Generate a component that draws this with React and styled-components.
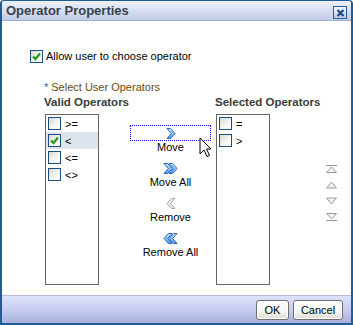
import React from 'react';
import styled, { createGlobalStyle } from 'styled-components';

const GlobalStyle = createGlobalStyle`
  html, body { margin: 0; padding: 0; background: #fff; }
  body {
    font-family: "Liberation Sans", Arial, sans-serif;
    font-size: 11px;
    color: #000;
  }
`;

const Window = styled.div`
  position: relative;
  width: 353px;
  height: 325px;
  box-sizing: border-box;
  display: flex;
  flex-direction: column;
  border: 1px solid #1f5c94;
  border-left-width: 2px;
  border-right-width: 2px;
  border-bottom-width: 2px;
  border-radius: 4px 4px 0 0;
  overflow: hidden;
  background: #fff;
`;

const TitleBar = styled.div`
  height: 19px;
  flex: none;
  display: flex;
  align-items: center;
  justify-content: space-between;
  padding: 0 4px 0 4px;
  background: linear-gradient(#eef1fa, #d9e0f2 45%, #c3cce6);
  border-bottom: 1px solid #9fb0d2;
`;

const Title = styled.span`
  font-size: 13px;
  font-weight: bold;
  color: #38434b;
`;

const CloseBox = styled.div`
  width: 12px;
  height: 11px;
  margin-top: 4px;
  border: 1px solid #2a5e98;
  background: linear-gradient(#f2f6fd, #bccbe8);
  display: flex;
  align-items: center;
  justify-content: center;
`;

const Body = styled.div`
  flex: 1;
  padding: 29px 0 0 28px;
  display: flex;
  flex-direction: column;
`;

const CheckRow = styled.label`
  display: flex;
  align-items: center;
  gap: 3px;
  height: 13px;
  line-height: 13px;
`;

const Box = styled.span`
  width: 11px;
  height: 11px;
  flex: none;
  border: 1px solid #1c4f7e;
  background: linear-gradient(135deg, #d9d9d2, #f6f6f3 60%, #fff);
  display: flex;
  align-items: center;
  justify-content: center;
`;

const Required = styled.div`
  margin: 18px 0 0 14px;
  line-height: 13px;
  color: #6a4a0c;
  span { color: #1a5cae; margin-right: 3px; }
`;

const Columns = styled.div`
  margin: 2px 0 0 15px;
  display: grid;
  grid-template-columns: 54px 117px 54px 1fr;
  grid-template-rows: 13px auto;
  row-gap: 5px;
`;

const Heading = styled.div`
  font-size: 11.5px;
  font-weight: bold;
  color: #353e37;
  white-space: nowrap;
  line-height: 13px;
  margin-left: -1px;
`;

const ListBox = styled.div`
  height: 171px;
  box-sizing: border-box;
  border: 1px solid #666;
  display: flex;
  flex-direction: column;
`;

const Item = styled.div`
  height: 17px;
  display: flex;
  align-items: center;
  gap: 4px;
  padding-left: 2px;
  background: ${(p) => (p.$selected ? '#dde4ee' : 'transparent')};
`;

const Shuttle = styled.div`
  margin: 11px 0 0 31px;
  width: 81px;
  display: flex;
  flex-direction: column;
  gap: 6px;
`;

const ShuttleButton = styled.div`
  display: flex;
  flex-direction: column;
  align-items: center;
`;

const IconArea = styled.div`
  width: 81px;
  height: 16px;
  box-sizing: border-box;
  display: flex;
  align-items: center;
  justify-content: center;
  border: 1px dotted ${(p) => (p.$focused ? '#0000ee' : 'transparent')};
`;

const Label = styled.div`
  line-height: 13px;
  text-align: center;
`;

const Reorder = styled.div`
  margin: 51px 0 0 56px;
  display: flex;
  flex-direction: column;
  gap: 8px;
`;

const Footer = styled.div`
  height: 27px;
  flex: none;
  border-top: 1px solid #b4bbe0;
  background: linear-gradient(#dde2fb, #c8cdf0 50%, #a9b0da);
  display: flex;
  align-items: center;
  justify-content: flex-end;
  gap: 4px;
  padding-right: 8px;
`;

const Button = styled.button`
  height: 20px;
  width: ${(p) => p.$w}px;
  padding: 0;
  font-family: "Liberation Sans", Arial, sans-serif;
  font-size: 11px;
  color: #000;
  border: 1px solid #6f6f6f;
  border-radius: 3px;
  background: linear-gradient(#ffffff, #f4f4f1 60%, #dcdcd6);
  box-shadow: inset 0 0 0 1px #fff;
`;

const Cursor = styled.svg`
  position: absolute;
  left: 197px;
  top: 136px;
`;

const Check = () => (
  <svg width="9" height="9" viewBox="0 0 9 9">
    <path d="M1 4.5 L3.5 7 L8 1.5" fill="none" stroke="#1f9f1f" strokeWidth="2.2" />
  </svg>
);

const CheckBox = ({ checked }) => <Box>{checked && <Check />}</Box>;

const Chevron = ({ double, left, disabled }) => {
  const id = `g${double ? 'd' : 's'}${left ? 'l' : 'r'}${disabled ? 'x' : ''}`;
  const w = double ? 15 : 10;
  const fill = disabled ? '#ececec' : `url(#${id})`;
  const stroke = disabled ? '#a9a9a9' : '#2a64c2';
  const shape = (dx) => (
    <polygon
      key={dx}
      points={`${dx + 0.5},0.5 ${dx + 4},0.5 ${dx + 8.5},5.5 ${dx + 4},10.5 ${dx + 0.5},10.5 ${dx + 4.8},5.5`}
      fill={fill}
      stroke={stroke}
      strokeWidth="1"
      strokeLinejoin="round"
    />
  );
  return (
    <svg width={w} height="11" viewBox={`0 0 ${w} 11`}>
      <defs>
        <linearGradient id={id} x1="0" y1="0" x2="0" y2="1">
          <stop offset="0" stopColor="#c9ecff" />
          <stop offset="1" stopColor="#4d9ef0" />
        </linearGradient>
      </defs>
      <g transform={left ? `translate(${w},0) scale(-1,1)` : undefined}>
        {double ? [shape(0.5), shape(5.5)] : shape(0.5)}
      </g>
    </svg>
  );
};

const Arrow = ({ kind }) => (
  <svg width="11" height="8" viewBox="0 0 11 8">
    {kind === 'top' && <line x1="0" y1="0.5" x2="11" y2="0.5" stroke="#9a9a9a" />}
    {kind === 'top' && <polygon points="5.5,2 10.5,7.5 0.5,7.5" fill="#f0f0f0" stroke="#9a9a9a" />}
    {kind === 'up' && <polygon points="5.5,1 10.5,7 0.5,7" fill="#f0f0f0" stroke="#9a9a9a" />}
    {kind === 'down' && <polygon points="0.5,1 10.5,1 5.5,7" fill="#f0f0f0" stroke="#9a9a9a" />}
    {kind === 'bottom' && <polygon points="0.5,0.5 10.5,0.5 5.5,6" fill="#f0f0f0" stroke="#9a9a9a" />}
    {kind === 'bottom' && <line x1="0" y1="7.5" x2="11" y2="7.5" stroke="#9a9a9a" />}
  </svg>
);

const valid = [
  { op: '>=' },
  { op: '<', checked: true },
  { op: '<=' },
  { op: '<>' },
];
const selected = [{ op: '=' }, { op: '>' }];

const shuttle = [
  { label: 'Move', focused: true },
  { label: 'Move All', double: true },
  { label: 'Remove', left: true, disabled: true },
  { label: 'Remove All', left: true, double: true },
];

export default function App() {
  return (
    <>
      <GlobalStyle />
      <Window>
        <TitleBar>
          <Title>Operator Properties</Title>
          <CloseBox>
            <svg width="9" height="8" viewBox="0 0 9 8">
              <path d="M1.5 1 L7.5 7 M7.5 1 L1.5 7" stroke="#1d4884" strokeWidth="2.2" />
            </svg>
          </CloseBox>
        </TitleBar>
        <Body>
          <CheckRow>
            <CheckBox checked />
            <span>Allow user to choose operator</span>
          </CheckRow>
          <Required>
            <span>*</span>Select User Operators
          </Required>
          <Columns>
            <Heading>Valid Operators</Heading>
            <div />
            <Heading>Selected Operators</Heading>
            <div />
            <ListBox>
              {valid.map((v) => (
                <Item key={v.op} $selected={v.checked}>
                  <CheckBox checked={v.checked} />
                  <span>{v.op}</span>
                </Item>
              ))}
            </ListBox>
            <Shuttle>
              {shuttle.map((s) => (
                <ShuttleButton key={s.label}>
                  <IconArea $focused={s.focused}>
                    <Chevron double={s.double} left={s.left} disabled={s.disabled} />
                  </IconArea>
                  <Label>{s.label}</Label>
                </ShuttleButton>
              ))}
            </Shuttle>
            <ListBox>
              {selected.map((v) => (
                <Item key={v.op}>
                  <CheckBox />
                  <span>{v.op}</span>
                </Item>
              ))}
            </ListBox>
            <Reorder>
              <Arrow kind="top" />
              <Arrow kind="up" />
              <Arrow kind="down" />
              <Arrow kind="bottom" />
            </Reorder>
          </Columns>
        </Body>
        <Footer>
          <Button $w={33}>OK</Button>
          <Button $w={50}>Cancel</Button>
        </Footer>
        <Cursor width="13" height="21" viewBox="0 0 13 21">
          <polygon
            points="1,1 1,17 5,13 8,19.5 10.5,18.5 7.5,12 12,12"
            fill="#fff"
            stroke="#000"
            strokeWidth="1"
          />
        </Cursor>
      </Window>
    </>
  );
}
